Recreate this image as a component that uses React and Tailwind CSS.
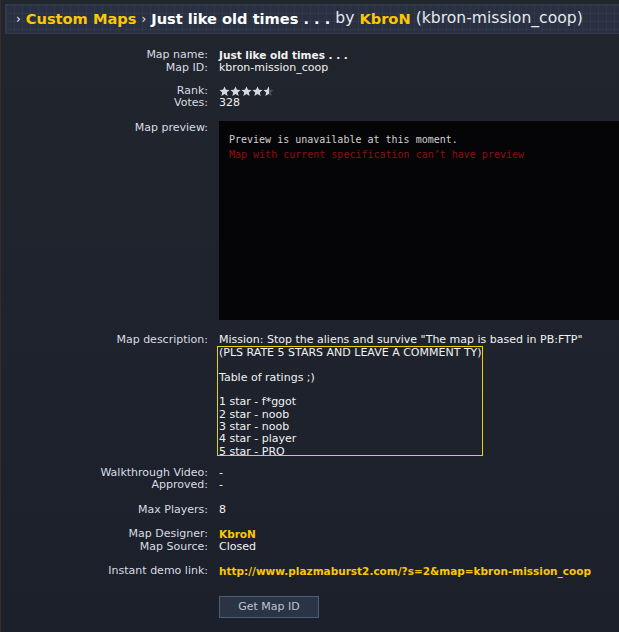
import React from "react";

const F = { fontFamily: '"DejaVu Sans", Verdana, sans-serif' };

function Star({ half }) {
  const id = half ? "hs" : "fs";
  return (
    <svg width="11" height="11" viewBox="0 0 24 24" className="block">
      <defs>
        <linearGradient id={id} x1="0" x2="1" y1="0" y2="0">
          <stop offset={half ? "0.55" : "1"} stopColor="#d6dae0" />
          <stop offset={half ? "0.55" : "1"} stopColor="#4a505c" />
        </linearGradient>
      </defs>
      <path
        d="M12 1l3.2 7.3 7.8.6-6 5.1 1.9 7.7L12 17.6l-6.9 4.1 1.9-7.7-6-5.1 7.8-.6z"
        fill={`url(#${id})`}
      />
    </svg>
  );
}

function Row({ label, children, className = "" }) {
  return (
    <div className={"flex leading-[12px] " + className}>
      <div className="w-[208px] shrink-0 text-right text-[#d9dde3]">{label}</div>
      <div className="ml-[11px] text-[#f2f2f2]">{children}</div>
    </div>
  );
}

export default function App() {
  return (
    <div
      className="relative min-h-[632px] w-full overflow-hidden bg-[linear-gradient(180deg,#21252d_0%,#1e232d_50%,#1b202b_100%)] text-[11px]"
      style={F}
    >
      <div className="absolute left-0 top-0 h-full w-px bg-[#3a2c2c]" />
      {/* header */}
      <div className="ml-[5px] mt-[4px] flex h-[30px] items-center border-y border-l border-[#323a4a] bg-[#283041] bg-[linear-gradient(rgba(255,255,255,0.035)_1px,transparent_1px),linear-gradient(90deg,rgba(255,255,255,0.035)_1px,transparent_1px)] bg-[size:8px_8px] pl-[10px] text-[15.6px] whitespace-nowrap">
        <span className="mr-[5px] text-[12px] text-[#e6e9ee]">›</span>
        <span className="text-[14.6px] font-bold text-[#fcc800]">Custom Maps</span>
        <span className="mx-[5px] text-[12px] text-[#e6e9ee]">›</span>
        <span className="text-[14.6px] font-bold text-white">Just like old times . . .</span>
        <span className="ml-[5px] text-[#e6e9ee]">by</span>
        <span className="ml-[5px] text-[14.6px] font-bold text-[#fcc800]">KbroN</span>
        <span className="ml-[5px] text-[#e6e9ee]">(kbron-mission_coop)</span>
      </div>

      <div className="mt-[15px]">
        <Row label="Map name:">
          <span className="text-[10.5px] font-bold">Just like old times . . .</span>
        </Row>
        <Row label="Map ID:">kbron-mission_coop</Row>

        <Row label="Rank:" className="mt-[11px]">
          <div className="flex h-[12px] items-center">
            <Star />
            <Star />
            <Star />
            <Star />
            <Star half />
          </div>
        </Row>
        <Row label="Votes:">328</Row>

        <div className="mt-[12px] flex">
          <div className="w-[208px] shrink-0 pt-px text-right leading-[12px] text-[#d9dde3]">Map preview:</div>
          <div
            className="ml-[11px] h-[199px] flex-1 bg-[#050508] pl-[10px] pt-[11px] text-[10px] leading-[15px]"
            style={{ fontFamily: '"DejaVu Sans Mono", "Liberation Mono", monospace' }}
          >
            <div className="text-[#d2d2d2]">Preview is unavailable at this moment.</div>
            <div className="text-[#8e0f0f]">Map with current specification can’t have preview</div>
          </div>
        </div>

        <div className="mt-[14px] flex leading-[12.3px]">
          <div className="w-[208px] shrink-0 text-right text-[#d9dde3]">Map description:</div>
          <div className="ml-[11px] text-[#f2f2f2]">
            <div className="whitespace-nowrap">Mission: Stop the aliens and survive "The map is based in PB:FTP"</div>
            <div className="ml-[-2px] h-[110px] w-[266px] overflow-hidden whitespace-nowrap border border-[#e6d400] pl-px">
              <div>(PLS RATE 5 STARS AND LEAVE A COMMENT TY)</div>
              <div>&nbsp;</div>
              <div>Table of ratings ;)</div>
              <div>&nbsp;</div>
              <div>1 star - f*ggot</div>
              <div>2 star - noob</div>
              <div>3 star - noob</div>
              <div>4 star - player</div>
              <div>5 star - PRO</div>
            </div>
          </div>
        </div>

        <Row label="Walkthrough Video:" className="mt-[11px]">-</Row>
        <Row label="Approved:">-</Row>

        <Row label="Max Players:" className="mt-[13px]">8</Row>

        <Row label="Map Designer:" className="mt-[12px]">
          <span className="text-[10.5px] font-bold text-[#fcc800]">KbroN</span>
        </Row>
        <Row label="Map Source:">Closed</Row>

        <Row label="Instant demo link:" className="mt-[12px]">
          <span className="text-[10.5px] font-bold text-[#fcc800]">http://www.plazmaburst2.com/?s=2&amp;map=kbron-mission_coop</span>
        </Row>

        <div className="ml-[219px] mt-[18px] flex h-[22px] w-[100px] items-center justify-center border border-[#4f5d76] bg-[#2b3445] text-[11px] text-[#bcc4d0]">
          Get Map ID
        </div>
      </div>
    </div>
  );
}
